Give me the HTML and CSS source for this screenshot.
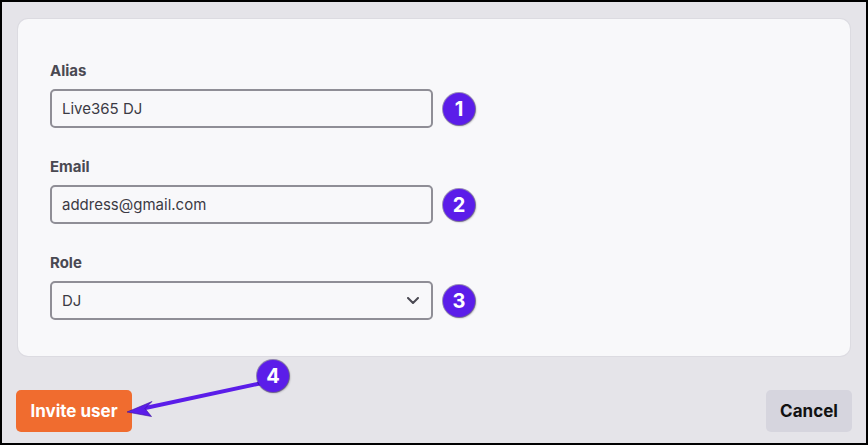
FILE: index.html
```html
<!DOCTYPE html>
<html lang="en">
<head>
    <meta charset="UTF-8">
    <meta name="viewport" content="width=device-width, initial-scale=1.0">
    <title>Invite user</title>
    <link rel="stylesheet" href="styles.css">
</head>
<body>
    <div class="frame">
        <form class="card">
            <div class="field">
                <label for="alias">Alias</label>
                <div class="row">
                    <input id="alias" class="control" type="text" value="Live365 DJ">
                    <span class="badge">1</span>
                </div>
            </div>
            <div class="field">
                <label for="email">Email</label>
                <div class="row">
                    <input id="email" class="control" type="text" value="address@gmail.com">
                    <span class="badge">2</span>
                </div>
            </div>
            <div class="field">
                <label for="role">Role</label>
                <div class="row">
                    <div class="select-wrap">
                        <select id="role" class="control">
                            <option>DJ</option>
                            <option>Admin</option>
                        </select>
                        <svg class="chevron" width="12" height="7" viewBox="0 0 12 7">
                            <path d="M1 1 L6 6 L11 1" fill="none" stroke="#4a4952" stroke-width="2" stroke-linecap="round" stroke-linejoin="round"/>
                        </svg>
                    </div>
                    <span class="badge">3</span>
                </div>
            </div>
        </form>

        <div class="actions">
            <button class="btn btn-primary" type="button">Invite user</button>
            <button class="btn btn-secondary" type="button">Cancel</button>
        </div>

        <!-- annotation arrow pointing at the invite button -->
        <svg class="annotation" width="868" height="445" viewBox="0 0 868 445">
            <g fill="#5b1de9" stroke="#3a0f9c" stroke-width="0.6">
                <path d="M262 383 L143 408.5" fill="none" stroke="#5b1de9" stroke-width="4"/>
                <path d="M127 412 L152 401.5 L145 408.5 L151.5 416.5 Z"/>
            </g>
        </svg>
        <span class="badge badge-float">4</span>
    </div>
</body>
</html>
```

FILE: styles.css
```css
* {
    box-sizing: border-box;
}

body {
    margin: 0;
    font-family: Inter, "Noto Sans", sans-serif;
}

.frame {
    position: relative;
    width: 868px;
    height: 445px;
    border: 2px solid #000;
    background-color: #e5e4e9;
    padding: 17px 14px 0 14px;
}

.card {
    margin: 0 2px;
    background-color: #f8f8fa;
    border-radius: 10px;
    box-shadow: 0 0 0 1px #dcdbe1;
    padding: 42px 32px 36px 32px;
    display: flex;
    flex-direction: column;
    gap: 29px;
}

.field label {
    display: block;
    font-size: 15px;
    line-height: 20px;
    font-weight: 700;
    color: #4a4952;
    margin-bottom: 8px;
}

.row {
    display: flex;
    align-items: center;
    gap: 10px;
}

.control {
    width: 383px;
    height: 39px;
    border: 2px solid #8f8e96;
    border-radius: 5px;
    background-color: #f8f8fa;
    padding: 0 10px;
    font-family: Inter, "Noto Sans", sans-serif;
    font-size: 15px;
    color: #3b3a44;
    outline: none;
    -webkit-appearance: none;
    appearance: none;
}

.select-wrap {
    position: relative;
}

.chevron {
    position: absolute;
    right: 14px;
    top: 16px;
    pointer-events: none;
}

.badge {
    width: 32px;
    height: 32px;
    border-radius: 50%;
    background-color: #5b1de9;
    color: #fff;
    font-size: 20px;
    font-weight: 700;
    display: flex;
    align-items: center;
    justify-content: center;
    box-shadow: 0 0 0 1px rgba(40, 10, 110, 0.45), 1px 1px 2px rgba(0, 0, 0, 0.35);
    flex-shrink: 0;
}

.badge-float {
    position: absolute;
    left: 255px;
    top: 358px;
}

.annotation {
    position: absolute;
    left: -2px;
    top: -2px;
    pointer-events: none;
}

.actions {
    display: flex;
    justify-content: space-between;
    margin-top: 34px;
}

.btn {
    height: 42px;
    border: none;
    border-radius: 5px;
    font-family: Inter, "Noto Sans", sans-serif;
    font-size: 17px;
    font-weight: 700;
    padding: 0;
    white-space: nowrap;
    cursor: pointer;
}

.btn-primary {
    width: 116px;
    background-color: #f06c2f;
    color: #fff;
}

.btn-secondary {
    width: 86px;
    background-color: #d6d5de;
    color: #111;
}
```
